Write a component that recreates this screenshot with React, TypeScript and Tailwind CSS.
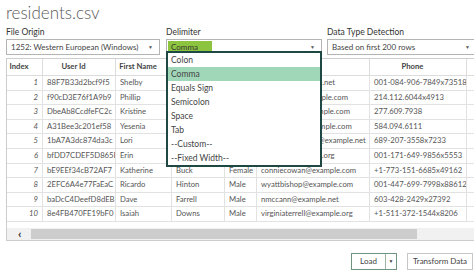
import { ReactNode } from "react";

type Row = [number, string, string, string, string, string, string, string];

const rows: Row[] = [
  [1, "88F7B33d2bcf9f5", "Shelby", "Terrell", "Male", "elijah57@example.net", "001-084-906-7849x73518", "1945-10-26"],
  [2, "f90cD3E76f1A9b9", "Phillip", "Summers", "Female", "bethany14@example.com", "214.112.6044x4913", "1910-03-24"],
  [3, "DbeAb8CcdfeFC2c", "Kristine", "Travis", "Male", "bthompson@example.com", "277.609.7938", "1992-07-02"],
  [4, "A31Bee3c201ef58", "Yesenia", "Martinez", "Male", "kaitlinkaiser@example.com", "584.094.6111", "2017-08-03"],
  [5, "1bA7A3dc874da3c", "Lori", "Todd", "Male", "buchananmanuel@example.net", "689-207-3558x7233", "1938-12-01"],
  [6, "bfDD7CDEF5D865B", "Erin", "Day", "Male", "tconner@example.org", "001-171-649-9856x5553", "2015-10-28"],
  [7, "bE9EEf34cB72AF7", "Katherine", "Buck", "Female", "conniecowan@example.com", "+1-773-151-6685x49162", "1989-01-22"],
  [8, "2EFC6A4e77FaEaC", "Ricardo", "Hinton", "Male", "wyattbishop@example.com", "001-447-699-7998x88612", "1924-03-26"],
  [9, "baDcC4DeefD8dEB", "Dave", "Farrell", "Male", "nmccann@example.net", "603-428-2429x27392", "2018-10-06"],
  [10, "8e4FB470FE19bF0", "Isaiah", "Downs", "Male", "virginiaterrell@example.org", "+1-511-372-1544x8206", "1964-09-20"],
];

const headers = ["Index", "User Id", "First Name", "Last Name", "Sex", "Email", "Phone", "Date of birth"];
const widths = ["w-[36px]", "w-[73px]", "w-[56px]", "w-[53px]", "w-[32px]", "w-[113px]", "w-[97px]", "w-[90px]"];

const delimiters = ["Colon", "Comma", "Equals Sign", "Semicolon", "Space", "Tab", "--Custom--", "--Fixed Width--"];

function Arrow() {
  return <span className="text-[5px] leading-none text-[#555]">▼</span>;
}

function Select({ className, children }: { className: string; children: ReactNode }) {
  return (
    <div
      className={`flex h-[16px] items-center justify-between whitespace-nowrap border border-[#b4b4b4] bg-white pr-[6px] ${className}`}
    >
      {children}
      <Arrow />
    </div>
  );
}

function Label({ children }: { children: ReactNode }) {
  return <div className="h-[12px] whitespace-nowrap text-[8.5px] leading-[12px] text-[#333]">{children}</div>;
}

export default function App() {
  return (
    <div className="relative h-[276px] w-[474px] overflow-hidden bg-white font-['Lato',sans-serif] text-[#444]">
      <div className="pl-[6px] pt-[2px] text-[17px] font-light leading-[22px] text-[#5a5a5a]">residents.csv</div>

      {/* options */}
      <div className="mt-[2px] flex pl-[6px]">
        <div className="w-[160px] shrink-0">
          <Label>File Origin</Label>
          <Select className="mt-[1px] w-[154px] pl-[4px] text-[8px]">
            <span>1252: Western European (Windows)</span>
          </Select>
        </div>
        <div className="w-[161px] shrink-0">
          <Label>Delimiter</Label>
          <Select className="mt-[1px] w-[156px] text-[8px]">
            <span className="ml-[1px] flex h-[13px] w-[44px] items-center bg-[#8dc43f] pl-[3px] text-[#333]">Comma</span>
          </Select>
        </div>
        <div className="shrink-0">
          <Label>Data Type Detection</Label>
          <Select className="mt-[1px] w-[150px] pl-[4px] text-[8px]">
            <span>Based on first 200 rows</span>
          </Select>
        </div>
      </div>

      {/* preview table */}
      <div className="ml-[6px] mt-[3px] overflow-hidden border-y border-l border-[#cdcdcd] text-[7.7px]">
        <div className="flex h-[17px] w-max border-b border-[#dcdcdc] font-bold text-[#444]">
          {headers.map((h, i) => (
            <div
              key={h}
              className={`${widths[i]} flex shrink-0 items-center justify-center whitespace-nowrap border-r border-[#dcdcdc] pr-[11px]`}
            >
              {h}
            </div>
          ))}
        </div>
        {rows.map((r) => (
          <div key={r[0]} className="flex h-[14.6px] w-max border-b border-[#e2e2e2] text-[#555]">
            {r.map((v, i) => (
              <div
                key={i}
                className={`${widths[i]} flex shrink-0 items-center overflow-hidden whitespace-nowrap border-r border-[#e2e2e2] ${
                  i === 0 ? "justify-end pr-[4px] italic" : i === 7 ? "justify-end pr-[4px]" : "pl-[4px]"
                }`}
              >
                {v}
              </div>
            ))}
          </div>
        ))}
        <div className="h-[6px]" />
        <div className="flex h-[12px] items-center bg-[#f1f1f1]">
          <span className="w-[24px] pl-[11px] text-[12px] font-bold leading-none text-[#333]">‹</span>
          <div className="h-[10px] w-[386px] bg-[#cdcdcd]" />
        </div>
      </div>

      {/* buttons */}
      <div className="mt-[12px] flex justify-end gap-[10px] pr-[1px] text-[8px] text-[#444]">
        <div className="flex h-[17px] border border-[#6f9580]">
          <div className="flex w-[33px] items-center justify-center">Load</div>
          <div className="flex w-[11px] items-center justify-center border-l border-[#9bb5a7]">
            <span className="text-[5px] leading-none">▼</span>
          </div>
        </div>
        <div className="flex h-[17px] w-[66px] items-center justify-center whitespace-nowrap border border-[#c6c6c6]">
          Transform Data
        </div>
      </div>

      {/* delimiter dropdown */}
      <div className="absolute left-[166px] top-[51px] w-[156px] border-2 border-[#1d4843] bg-white text-[8.5px] text-[#444]">
        {delimiters.map((d) => (
          <div key={d} className={`flex h-[14px] items-center pl-[3px] ${d === "Comma" ? "bg-[#a1d7b9]" : ""}`}>
            {d}
          </div>
        ))}
      </div>
    </div>
  );
}
